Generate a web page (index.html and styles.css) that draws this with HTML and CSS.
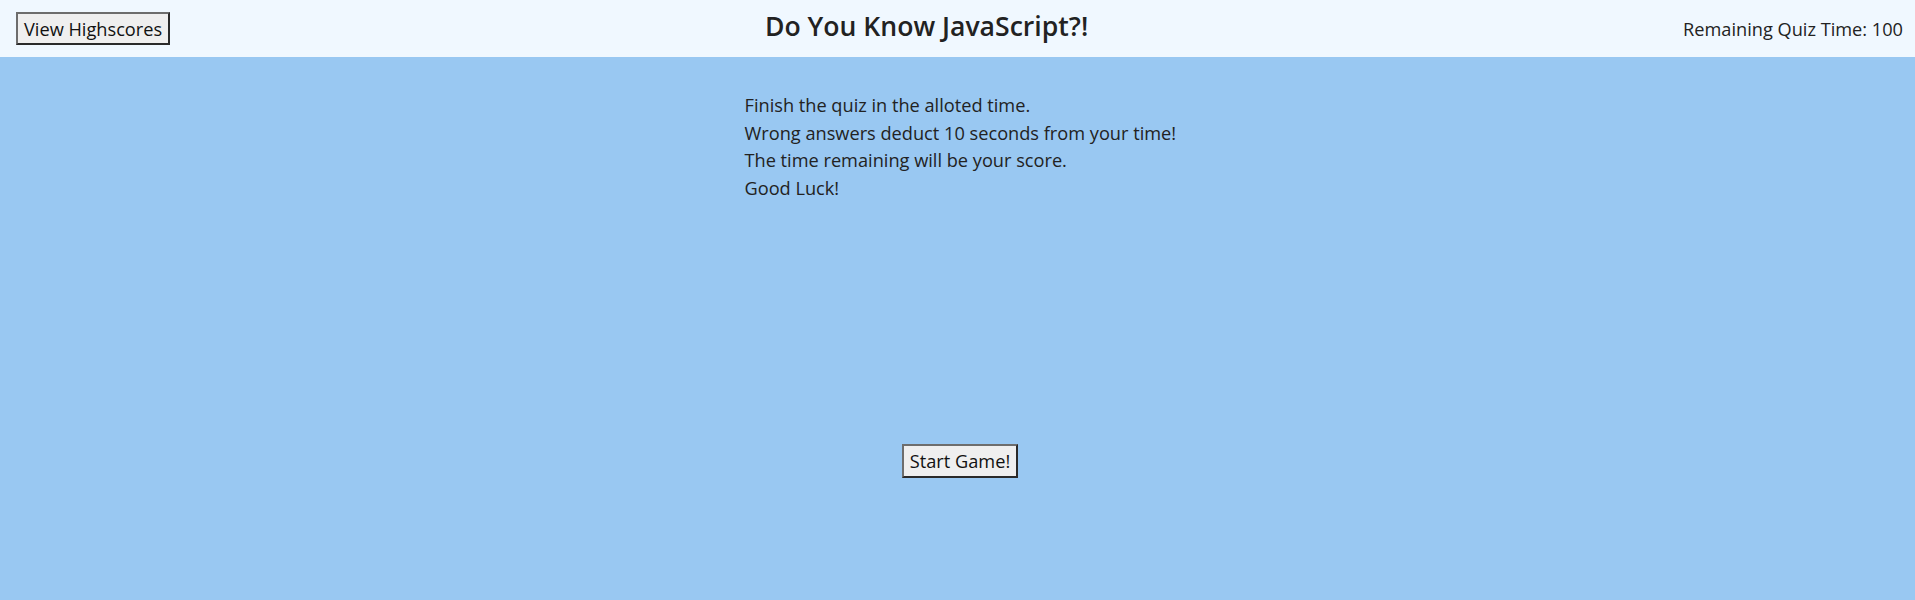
FILE: index.html
```html
<!DOCTYPE html>
<html lang="en">
<head>
<meta charset="utf-8">
<title>Do You Know JavaScript?!</title>
<link rel="stylesheet" href="styles.css">
</head>
<body>
<header class="topbar">
  <button class="btn btn-scores">View Highscores</button>
  <h1 class="title">Do You Know JavaScript?!</h1>
  <div class="timer">Remaining Quiz Time: 100</div>
</header>
<main class="main">
  <div class="intro">
    <p>Finish the quiz in the alloted time.</p>
    <p>Wrong answers deduct 10 seconds from your time!</p>
    <p>The time remaining will be your score.</p>
    <p>Good Luck!</p>
  </div>
  <div class="start-row">
    <button class="btn btn-start">Start Game!</button>
  </div>
</main>
</body>
</html>
```

FILE: styles.css
```css
html, body {
  margin: 0;
  padding: 0;
  height: 100%;
}
body {
  font-family: "Open Sans", "Noto Sans", sans-serif;
  color: #222;
  background: #99c8f2;
}
.topbar {
  height: 57px;
  box-sizing: border-box;
  background: #f0f8ff;
  display: flex;
  align-items: center;
  justify-content: space-between;
  padding: 0 12px 0 16px;
}
.title {
  margin: 0 0 5px 0;
  font-size: 26.6px;
  font-weight: 600;
}
.timer {
  font-size: 18.2px;
}
.btn {
  font-family: inherit;
  font-size: 18.2px;
  color: #111;
  background: #efefef;
  border-style: solid;
  border-width: 2px;
  border-color: #6d6d6d #2a2a2a #2a2a2a #6d6d6d;
  padding: 0 6px;
  border-radius: 0;
}
.btn-scores {
  height: 33px;
}
.main {
  padding-top: 35px;
}
.intro {
  width: 432px;
  margin-left: calc(50% - 213px);
  font-size: 18.2px;
  line-height: 27.7px;
}
.intro p {
  margin: 0;
  white-space: nowrap;
}
.start-row {
  display: flex;
  justify-content: center;
  padding-left: 5px;
  margin-top: 241px;
}
.btn-start {
  height: 34px;
}
```
